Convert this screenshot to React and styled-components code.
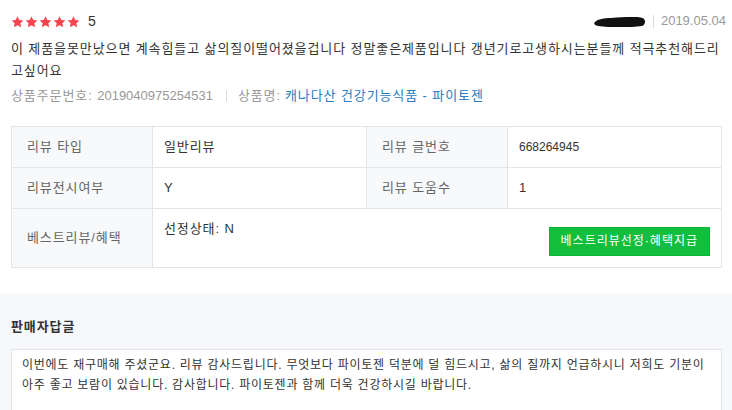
import React from "react";
import styled, { createGlobalStyle } from "styled-components";

const GlobalStyle = createGlobalStyle`
  html, body { margin: 0; padding: 0; background: #fff; }
  body {
    font-family: "Liberation Sans", "Noto Sans CJK KR", sans-serif;
    color: #333;
    font-size: 13px;
    letter-spacing: 0.9px;
  }
  * { box-sizing: border-box; }
`;

const Num = styled.span`
  letter-spacing: 0;
`;

const Page = styled.div`
  width: 732px;
  height: 410px;
  display: flex;
  flex-direction: column;
`;

const Review = styled.section`
  padding: 10px 6px 25px 11px;
  display: flex;
  flex-direction: column;
`;

const ReviewHead = styled.div`
  display: flex;
  align-items: center;
  justify-content: space-between;
  height: 22px;
`;

const Rating = styled.div`
  display: flex;
  align-items: center;
  gap: 8px;
`;

const Stars = styled.div`
  display: flex;
  gap: 1px;
  padding-top: 1px;
`;

const Score = styled.span`
  font-size: 14px;
  color: #333;
  line-height: 20px;
  letter-spacing: 0;
`;

const Writer = styled.div`
  display: flex;
  align-items: center;
  gap: 7px;
`;

const Divider = styled.span`
  display: inline-block;
  width: 1px;
  height: ${(p) => p.h || 12}px;
  background: #dcdcdc;
`;

const DateText = styled.span`
  color: #999;
  font-size: 13px;
  line-height: 20px;
  letter-spacing: 0;
`;

const ReviewText = styled.p`
  margin: 6px 0 0;
  font-size: 13px;
  line-height: 22px;
  color: #333;
`;

const ProductLine = styled.div`
  margin-top: 4px;
  display: flex;
  align-items: center;
  font-size: 13px;
  line-height: 20px;
  color: #999;
`;

const Sep = styled(Divider)`
  margin: 0 11px 0 13px;
`;

const ProductName = styled.span`
  color: #2a7bbf;
  margin-left: 4px;
`;

const InfoTable = styled.div`
  margin: 20px 4px 0 0;
  display: grid;
  grid-template-columns: 141px 1fr 141px 1fr;
  border-top: 1px solid #e3e5e8;
  border-left: 1px solid #e3e5e8;
`;

const Label = styled.div`
  background: #f8f9fb;
  color: #666;
  padding: 0 15px;
  min-height: 41px;
  display: flex;
  align-items: center;
  border-right: 1px solid #e3e5e8;
  border-bottom: 1px solid #e3e5e8;
  line-height: 18px;
`;

const Value = styled.div`
  color: #333;
  font-size: ${(p) => (p.small ? 12 : 13)}px;
  padding: ${(p) => (p.wide ? "11px" : "0 11px")};
  min-height: 41px;
  display: flex;
  align-items: ${(p) => (p.wide ? "flex-start" : "center")};
  justify-content: space-between;
  grid-column: ${(p) => (p.wide ? "span 3" : "auto")};
  border-right: 1px solid #e3e5e8;
  border-bottom: 1px solid #e3e5e8;
  line-height: 18px;
`;

const BestButton = styled.button`
  margin-top: 7px;
  height: 29px;
  padding: 0 11px;
  border: 1px solid #0eb337;
  background: #12bf3d;
  color: #fff;
  font-family: inherit;
  font-size: 12px;
  letter-spacing: 1px;
  line-height: 27px;
  cursor: pointer;
`;

const ReplySection = styled.section`
  flex: 1;
  min-height: 0;
  background: #f7f8fa;
  padding: 24px 10px 0 11px;
  display: flex;
  flex-direction: column;
`;

const ReplyTitle = styled.h3`
  margin: 0;
  font-size: 13px;
  font-weight: bold;
  line-height: 20px;
  color: #333;
`;

const ReplyBox = styled.div`
  flex: 1;
  margin-top: 12px;
  background: #fff;
  border: 1px solid #e1e3e6;
  border-bottom: 0;
  padding: 5px 10px 0;
  font-size: 12px;
  letter-spacing: 0.75px;
  line-height: 20px;
  color: #333;
`;

const Star = () => (
  <svg width="13" height="12" viewBox="0 0 24 23" aria-hidden="true">
    <path
      d="M12 0.5l3.4 7.2 7.9 0.9-5.9 5.4 1.7 7.8L12 17.9l-7.1 3.9 1.7-7.8L0.7 8.6l7.9-0.9z"
      fill="#f4454f"
    />
  </svg>
);

const Redacted = () => (
  <svg width="52" height="14" viewBox="0 0 52 14" aria-hidden="true">
    <path
      d="M1 8c3-3 9-4 16-4 7-1 14-1 20-1 6 0 11 0 13 2 2 2 1 6-2 7-6 1-14 1-22 1-8 0-16 0-22-1-3-1-5-2-3-4z"
      fill="#111"
    />
  </svg>
);

export default function App() {
  return (
    <>
      <GlobalStyle />
      <Page>
        <Review>
          <ReviewHead>
            <Rating>
              <Stars>
                {[0, 1, 2, 3, 4].map((i) => (
                  <Star key={i} />
                ))}
              </Stars>
              <Score>5</Score>
            </Rating>
            <Writer>
              <Redacted />
              <Divider h={13} />
              <DateText>2019.05.04</DateText>
            </Writer>
          </ReviewHead>
          <ReviewText>
            이 제품을못만났으면 계속힘들고 삶의질이떨어졌을겁니다 정말좋은제품입니다 갱년기로고생하시는분들께 적극추천해드리고싶어요
          </ReviewText>
          <ProductLine>
            <span>
              상품주문번호: <Num>2019040975254531</Num>
            </span>
            <Sep />
            <span>상품명:</span>
            <ProductName>캐나다산 건강기능식품 - 파이토젠</ProductName>
          </ProductLine>
          <InfoTable>
            <Label>리뷰 타입</Label>
            <Value>일반리뷰</Value>
            <Label>리뷰 글번호</Label>
            <Value small>
              <Num>668264945</Num>
            </Value>
            <Label>리뷰전시여부</Label>
            <Value>
              <Num>Y</Num>
            </Value>
            <Label>리뷰 도움수</Label>
            <Value>
              <Num>1</Num>
            </Value>
            <Label>베스트리뷰/혜택</Label>
            <Value wide>
              <span>
                선정상태: <Num>N</Num>
              </span>
              <BestButton type="button">베스트리뷰선정·혜택지급</BestButton>
            </Value>
          </InfoTable>
        </Review>
        <ReplySection>
          <ReplyTitle>판매자답글</ReplyTitle>
          <ReplyBox>
            이번에도 재구매해 주셨군요. 리뷰 감사드립니다. 무엇보다 파이토젠 덕분에 덜 힘드시고, 삶의 질까지 언급하시니 저희도 기분이 아주 좋고 보람이 있습니다. 감사합니다. 파이토젠과 함께 더욱 건강하시길 바랍니다.
          </ReplyBox>
        </ReplySection>
      </Page>
    </>
  );
}
